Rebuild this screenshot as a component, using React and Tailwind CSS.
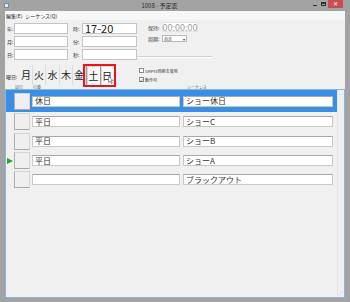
import React from "react";

const F = "font-['Noto_Sans_CJK_JP','Noto_Sans',sans-serif]";

function FieldRow({ l1, l2, v2 }) {
  return (
    <div className="flex items-center h-[11px]">
      <div className="w-[9px] pl-[2px] text-[5px] leading-none text-[#333]">{l1}</div>
      <div className="w-[54px] h-[11px] bg-white border border-[#c4c4c4]" />
      <div className="w-[14px] pl-[5px] text-[5px] leading-none text-[#333]">{l2}</div>
      <div className="w-[55px] h-[11px] bg-white border border-[#c4c4c4] flex items-center pl-[2px] text-[11px] leading-none text-[#222]">
        {v2}
      </div>
    </div>
  );
}

const days = [
  ["月", "w-[13px]"],
  ["火", "w-[13px]"],
  ["水", "w-[14px]"],
  ["木", "w-[13px]"],
  ["金", "w-[13px]"],
  ["土", "w-[14px]"],
  ["日", "w-[13px]"],
];

const rows = [
  { a: "休日", b: "ショー休日", sel: true, h: "h-[22px]" },
  { a: "平日", b: "ショーC", h: "h-[19px]" },
  { a: "平日", b: "ショーB", h: "h-[20px]" },
  { a: "平日", b: "ショーA", play: true, h: "h-[19px]" },
  { a: "", b: "ブラックアウト", h: "h-[19px]" },
];

export default function App() {
  return (
    <div className={`w-[350px] h-[302px] bg-[#a3a3a3] flex flex-col overflow-hidden ${F}`}>
      {/* title bar */}
      <div className="h-[11px] flex items-center relative">
        <div className="ml-[4px] w-[5px] h-[5px] bg-[#e8e8e8] border border-[#6a8db5]" />
        <div className="flex-1 text-center text-[6px] leading-none text-[#2a2a2a]">1008 - 予定表</div>
        <div className="flex items-start h-full self-start">
          <div className="w-[9px] h-[8px] flex items-center justify-center">
            <div className="w-[4px] h-[1px] bg-[#333] mt-[2px]" />
          </div>
          <div className="w-[9px] h-[8px] flex items-center justify-center">
            <div className="w-[5px] h-[4px] border border-[#333] border-t-2" />
          </div>
          <div className="w-[15px] h-[8px] bg-[#c94f4f] flex items-center justify-center text-white text-[6px] leading-none mr-[7px]">✕</div>
        </div>
      </div>

      {/* client */}
      <div className="flex-1 mx-[5px] mb-[4px] bg-[#f0f0f0] flex flex-col">
        {/* menu */}
        <div className="h-[9px] bg-[#f6f7f9] flex items-center pl-[1px] gap-[3px] text-[5px] leading-none text-[#222]">
          <span>編集(E)</span>
          <span>シーケンス(Q)</span>
        </div>

        {/* top form */}
        <div className="flex">
          <div className="w-[133px] flex flex-col">
            <div className="flex flex-col gap-[2px] mt-[3px]">
              <FieldRow l1="年:" l2="時:" v2="17-20" />
              <FieldRow l1="月:" l2="分:" v2="" />
              <FieldRow l1="日:" l2="秒:" v2="" />
            </div>
            {/* day row */}
            <div className="relative flex items-center mt-[5px] h-[20px]">
              <div className="w-[15px] pl-[1px] text-[5px] leading-none text-[#333] mt-[3px]">曜日:</div>
              {days.map(([d, w], i) => (
                <div
                  key={d}
                  className={`${w} h-[20px] flex items-center justify-center text-[10px] leading-none text-[#222] ${
                    i >= 5
                      ? "bg-[#f7f7f7] border-l border-t border-[#9a9a9a] shadow-[inset_1px_1px_0_#d6d6d6]"
                      : "border-r border-[#dcdcdc]"
                  }`}
                >
                  {d}
                </div>
              ))}
              <div className="absolute left-[78px] top-[-1px] w-[33px] h-[23px] border-2 border-[#e8161b]" />
              <svg className="absolute left-[103px] top-[11px]" width="6" height="8" viewBox="0 0 6 8">
                <path d="M0.5 0.5 L0.5 6.5 L2 5 L3.2 7.5 L4.2 7 L3 4.6 L5.2 4.6 Z" fill="#fff" stroke="#555" strokeWidth="0.6" />
              </svg>
            </div>
            <div className="flex h-[4px] items-end text-[4px] leading-none text-[#555]">
              <span className="ml-[10px]">試行</span>
              <span className="ml-[10px]">行番</span>
            </div>
          </div>

          {/* right column */}
          <div className="flex flex-col w-[75px]">
            <div className="flex items-center mt-[2px] h-[10px]">
              <span className="ml-[10px] w-[14px] text-[5px] leading-none text-[#333]">保持:</span>
              <div className="w-[36px] h-[10px] bg-white border border-[#e4e4e4] flex items-center justify-center text-[9px] leading-none text-[#a0a0a0]">
                00:00:00
              </div>
            </div>
            <div className="flex items-center mt-[3px] h-[7px]">
              <span className="ml-[10px] w-[14px] text-[5px] leading-none text-[#333]">周期:</span>
              <div className="w-[25px] h-[7px] bg-white border border-[#b8b8b8] flex items-center justify-between px-[1px] text-[4px] leading-none text-[#333]">
                <span>自走</span>
                <span className="text-[4px]">▾</span>
              </div>
            </div>
            <div className="mt-[14px] h-[2px] border-t border-[#cfcfcf] border-b border-b-white w-[74px]" />
            <div className="flex items-center mt-[10px] h-[5px] ml-[1px] gap-[1px]">
              <div className="w-[5px] h-[5px] bg-white border border-[#8a8a8a]" />
              <span className="text-[4px] leading-none text-[#333]">SMPTE時刻を使用</span>
            </div>
            <div className="flex items-center mt-[4px] h-[5px] ml-[1px] gap-[1px]">
              <div className="w-[5px] h-[5px] bg-white border border-[#8a8a8a] flex items-center justify-center text-[4px] leading-none text-[#222]">✓</div>
              <span className="text-[4px] leading-none text-[#333]">動作可</span>
            </div>
            <div className="flex-1 flex items-end">
              <span className="ml-[49px] text-[4px] leading-none text-[#555]">シーケンス</span>
            </div>
          </div>
        </div>

        {/* grid panel */}
        <div className="flex-1 border border-[#86b6e6] flex">
          <div className="flex-1 flex flex-col">
            {rows.map((r, i) => (
              <div key={i} className={`${r.h} flex items-center ${r.sel ? "bg-[#3a8ee4]" : ""}`}>
                <div className="w-[8px] h-full flex items-center">
                  {r.play && (
                    <svg width="6" height="6" viewBox="0 0 6 6" className="ml-[1px]">
                      <path d="M0 0 L6 3 L0 6 Z" fill="#1aaa2a" />
                    </svg>
                  )}
                </div>
                <div className="w-[16px] h-[17px] bg-[#efefef] border border-[#d4d4d4] border-b-[#a8a8a8] border-l-[#b0b0b0]" />
                <div className="w-[148px] h-[11px] ml-[2px] bg-white border border-[#c8c8c8] border-t-[#a8a8a8] flex items-center pl-[2px] text-[8px] leading-none text-[#333]">
                  {r.a}
                </div>
                <div className="w-[150px] h-[11px] ml-[3px] bg-white border border-[#c8c8c8] border-t-[#a8a8a8] flex items-center pl-[2px] text-[8px] leading-none text-[#333]">
                  {r.b}
                </div>
              </div>
            ))}
          </div>
          <div className="w-[7px] border-l border-[#e4e4e4] bg-[#f0f0f0] flex flex-col items-center justify-between py-[3px]">
            <span className="text-[5px] leading-none text-[#999]">˄</span>
            <span className="text-[4px] leading-none text-[#aaa]">⋰</span>
          </div>
        </div>
      </div>
    </div>
  );
}
